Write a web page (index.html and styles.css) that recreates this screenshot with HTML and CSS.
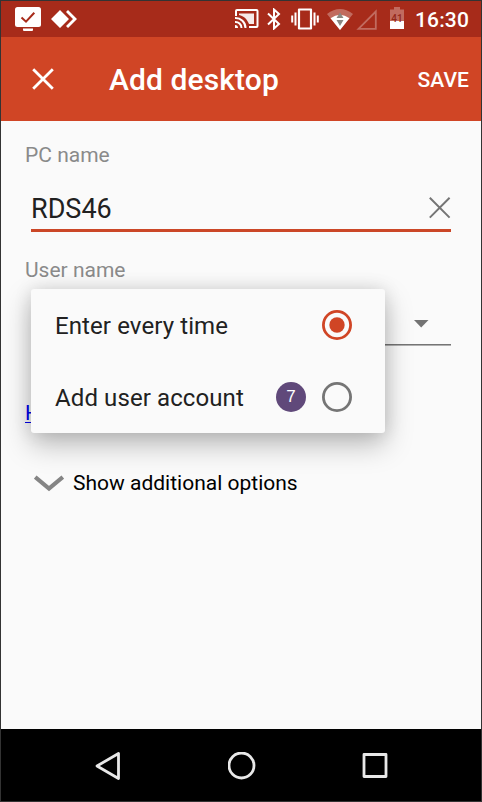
FILE: index.html
```html
<!DOCTYPE html>
<html lang="en">
<head>
<meta charset="utf-8">
<title>Add desktop</title>
<link rel="stylesheet" href="styles.css">
</head>
<body>
<div class="phone">
  <header class="status">
    <svg class="monitor" width="26" height="24" viewBox="0 0 26 24"><rect width="26" height="20" rx="2.5" fill="#fff"/><path d="M8 21.5h10v1.5a1 1 0 0 1-1 1H9a1 1 0 0 1-1-1z" fill="#fff"/><path d="M6.500 10.500l4.500 4.200 8.300-9" fill="none" stroke="#a72b1a" stroke-width="2"/></svg>
    <svg class="remote" width="26" height="18" viewBox="0 0 26 18"><path d="M9 0l9 9-9 9-9-9zM15 2l2-2 9 9-9 9-2-2 7-7z" fill="#fff"/></svg>
    <svg class="cast" width="24" height="20" viewBox="0 0 24 20"><path d="M1 7V2a1 1 0 0 1 1-1h19.500a1 1 0 0 1 1 1v15a1 1 0 0 1-1 1H14" fill="none" stroke="#fff" stroke-width="2"/><path d="M4 4.500h15v10.500h-5C12 10 9 7 4 6z" fill="#fff" opacity=".9"/><path d="M0 16a3 3 0 0 1 3 3H0z" fill="#fff"/><path d="M0 13a6 6 0 0 1 6.500 6M0 9a10 10 0 0 1 10.500 10" fill="none" stroke="#fff" stroke-width="2"/></svg>
    <svg class="bluetooth" width="14" height="22" viewBox="0 0 14 22"><path d="M1 5.500l11 10.500-5 4.500V1.500l5 4.500L1 16.500" fill="none" stroke="#fff" stroke-width="2"/></svg>
    <svg class="vibrate" width="28" height="22" viewBox="0 0 28 22"><path d="M8 1.500h12v19H8z" fill="none" stroke="#fff" stroke-width="2.200" stroke-linejoin="round"/><path d="M4.500 4.500v13M1.200 7.500v7M23.500 4.500v13M26.800 7.500v7" stroke="#fff" stroke-width="2"/></svg>
    <svg class="wifi" width="26" height="21" viewBox="0 0 26 21"><path d="M0 5Q13-5 26 5L13 21z" fill="#fff" opacity=".3"/><path d="M3.500 9.300Q13 2 22.500 9.300L13 21z" fill="#fff"/><path d="M13 3.500l3.500 5.500h-7zM9.500 11h7L13 17z" fill="#8a8883"/></svg>
    <svg class="signal" width="21" height="21" viewBox="0 0 21 21"><path d="M2.500 19.800L19.800 2.500v17.300z" fill="none" stroke="#fff" stroke-width="1.800" opacity=".3"/></svg>
    <svg class="battery" width="14" height="22" viewBox="0 0 14 22"><path d="M0 2.500h4V0h6v2.500h4V14H0z" fill="#fff" opacity=".3"/><path d="M0 14h14v8H0z" fill="#fff"/><text x="7" y="14.500" text-anchor="middle" font-size="10" font-weight="500" fill="#922719">41</text></svg>
    <span class="clock">16:30</span>
  </header>
  <div class="appbar">
    <svg width="22" height="22" viewBox="0 0 22 22"><path d="M1.200 1.200l19.600 19.600M20.800 1.200L1.200 20.800" stroke="#fff" stroke-width="2.800"/></svg>
    <h1>Add desktop</h1>
    <span class="save">SAVE</span>
  </div>
  <main>
    <div class="label">PC name</div>
    <div class="field">
      <span>RDS46</span>
      <svg width="22" height="22" viewBox="0 0 22 22"><path d="M.8.800l19.800 19.800M20.600.800L.8 20.600" stroke="#757575" stroke-width="2"/></svg>
    </div>
    <div class="label user">User name</div>
    <div class="select">
      <svg width="15" height="8" viewBox="0 0 15 8"><path d="M0 0h14.500L7.200 7.500z" fill="#737373"/></svg>
      <div class="menu">
        <div class="option"><span>Enter every time</span><svg class="radio" width="30" height="30" viewBox="0 0 30 30"><circle cx="15" cy="15" r="13.600" fill="none" stroke="#d04525" stroke-width="2.800"/><circle cx="15" cy="15" r="7.700" fill="#d04525"/></svg></div>
        <div class="option"><span>Add user account</span><b class="step">7</b><svg class="radio" width="30" height="30" viewBox="0 0 30 30"><circle cx="15" cy="15" r="13.600" fill="none" stroke="#757575" stroke-width="2.800"/></svg></div>
      </div>
    </div>
    <a class="help">H</a>
    <div class="more">
      <svg width="30" height="17" viewBox="0 0 30 17"><path d="M1.200 2L15 13.500 28.800 2" fill="none" stroke="#858585" stroke-width="4.200"/></svg>
      <span>Show additional options</span>
    </div>
  </main>
  <nav>
    <svg width="26" height="30" viewBox="0 0 26 30"><path d="M23.500 2.500v25L2 15z" fill="none" stroke="#e8e8e8" stroke-width="2.800" stroke-linejoin="round"/></svg>
    <svg width="28" height="28" viewBox="0 0 28 28"><circle cx="13.500" cy="13.500" r="12.500" fill="none" stroke="#e8e8e8" stroke-width="2.800"/></svg>
    <svg width="26" height="26" viewBox="0 0 26 26"><rect x="2" y="1.500" width="22" height="22" fill="none" stroke="#e8e8e8" stroke-width="2.800" stroke-linejoin="round"/></svg>
  </nav>
</div>
</body>
</html>
```
FILE: styles.css
```css
* { box-sizing: border-box; }
body { margin: 0; font-family: Roboto, sans-serif; }
svg { display: block; flex: none; }
.phone {
  width: 482px; height: 802px;
  border: 1px solid #333;
  display: flex; flex-direction: column;
  background: #fafafa; overflow: hidden;
}
.status {
  height: 36px; flex: none; background: #a72b1a;
  display: flex; align-items: center; padding-left: 14px;
}
.remote { margin-left: 10px; }
.cast { margin-left: 158px; }
.bluetooth { margin-left: 8px; }
.vibrate { margin-left: 10px; }
.wifi { margin-left: 8px; }
.signal { margin-left: 3px; }
.battery { margin-left: 13px; margin-top: -2px; }
.clock { margin-left: 11px; color: #fff; font-size: 21px; font-weight: 500; line-height: 36px; letter-spacing: .15px; padding-top: 1px; }
.appbar {
  height: 84px; flex: none; background: #d04525; color: #fff;
  display: flex; align-items: center; padding: 0 12px 0 31px;
}
h1 { margin: 2px 0 0 55px; font-size: 30px; font-weight: 500; line-height: 36px; letter-spacing: .1px; }
.save { margin-left: auto; padding-top: 1px; font-size: 21px; font-weight: 500; letter-spacing: .1px; }
main { flex: 1; padding: 21px 30px 0 24px; }
.label { font-size: 21px; line-height: 26px; color: #8a8a8a; }
.field {
  margin: 21px 0 0 6px; height: 43px;
  border-bottom: 3px solid #cb4727;
  display: flex; justify-content: space-between;
  font-size: 27px; line-height: 40px; color: #212121;
}
.field svg { margin: 8px 0 0; }
.user { margin-top: 25px; }
.select {
  position: relative; margin: 6px 0 0 6px; height: 56px;
  border-bottom: 1px solid #757575; box-shadow: 0 1px #b0b0b0;
  display: flex; justify-content: flex-end; padding: 31px 22px 0 0;
}
.menu {
  position: absolute; left: 0; top: 0; width: 354px; height: 144px;
  background: #fafafa; border-radius: 3px;
  box-shadow: 0 12px 28px rgba(0,0,0,.25), 0 0 18px rgba(0,0,0,.12);
}
.option {
  height: 72px; display: flex; align-items: center;
  padding: 0 33px 0 24px; font-size: 24px; letter-spacing: .1px; color: #212121;
}
.option span { padding-top: 2px; }
.radio { margin-left: auto; }
.step {
  width: 30px; height: 30px; border-radius: 50%; margin-left: auto;
  background: #60497a; color: #fff; text-align: center;
  font: 17px/29px "Liberation Sans", sans-serif;
}
.step + .radio { margin-left: 16px; }
.help {
  display: block; margin-top: 55px; width: 20px; font-size: 21px; line-height: 26px;
  color: #00e; text-decoration: underline; text-decoration-thickness: 1px; text-underline-offset: 2px;
}
.more { margin: 44px 0 0 9px; display: flex; align-items: center; gap: 9px; font-size: 21px; line-height: 26px; color: #000; }
nav {
  height: 72px; flex: none; background: #000;
  display: flex; align-items: center; justify-content: space-between;
  padding: 2px 93px 0 94px;
}
```
